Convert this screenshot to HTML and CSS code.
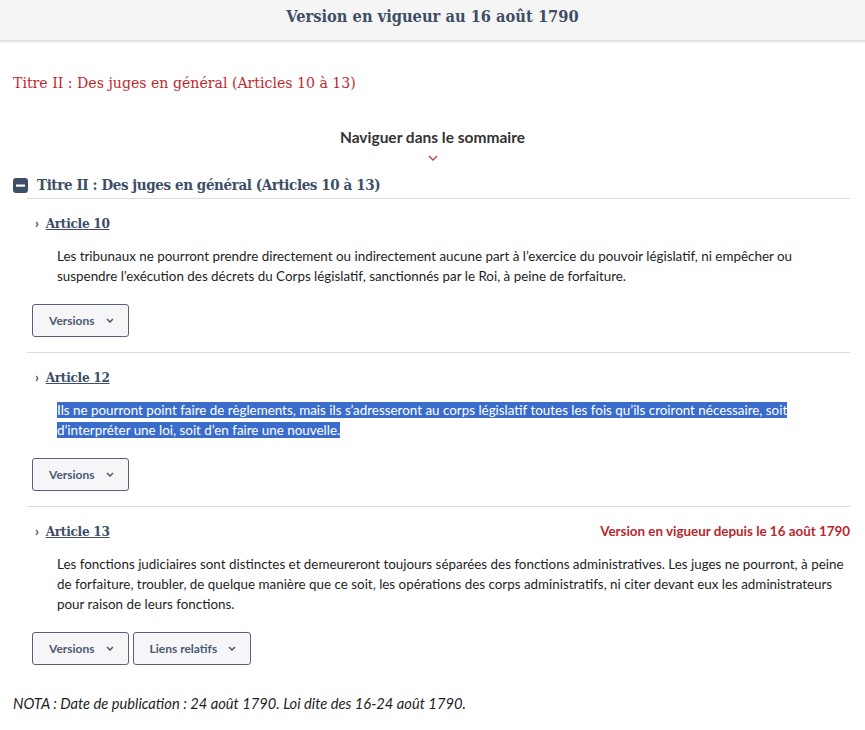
FILE: index.html
```html
<!DOCTYPE html>
<html lang="fr">
<head>
    <meta charset="UTF-8" />
    <title>Version en vigueur au 16 août 1790</title>
    <link rel="stylesheet" href="styles.css">
</head>
<body>
    <div class="version-bar">Version en vigueur au 16 août 1790</div>

    <h1 class="titre-haut">Titre II : Des juges en général (Articles 10 à 13)</h1>

    <div class="naviguer">
        <span>Naviguer dans le sommaire</span>
        <svg class="nav-chevron" width="10" height="6" viewBox="0 0 10 6"><path d="M1 1l4 4 4-4" fill="none" stroke="#b83a3a" stroke-width="1.3"/></svg>
    </div>

    <div class="section">
        <h2 class="section-titre">
            <svg width="15" height="15" viewBox="0 0 15 15"><rect x="0" y="0" width="15" height="15" rx="3" fill="#3d4e66"/><rect x="3" y="6.5" width="9" height="2.2" fill="#fff"/></svg>
            Titre II : Des juges en général (Articles 10 à 13)
        </h2>

        <div class="article">
            <div class="article-head">
                <a class="article-lien" href="#"><span class="chev">›</span><u>Article 10</u></a>
            </div>
            <p class="article-texte">Les tribunaux ne pourront prendre directement ou indirectement aucune part à l’exercice du pouvoir législatif, ni empêcher ou suspendre l’exécution des décrets du Corps législatif, sanctionnés par le Roi, à peine de forfaiture.</p>
            <div class="boutons">
                <button class="btn">Versions <svg width="8" height="5" viewBox="0 0 8 5"><path d="M1 1l3 3 3-3" fill="none" stroke="#4a5a70" stroke-width="1.5"/></svg></button>
            </div>
        </div>

        <div class="article">
            <div class="article-head">
                <a class="article-lien" href="#"><span class="chev">›</span><u>Article 12</u></a>
            </div>
            <p class="article-texte"><span class="selection">Ils ne pourront point faire de règlements, mais ils s’adresseront au corps législatif toutes les fois qu’ils croiront nécessaire, soit d’interpréter une loi, soit d’en faire une nouvelle.</span></p>
            <div class="boutons">
                <button class="btn">Versions <svg width="8" height="5" viewBox="0 0 8 5"><path d="M1 1l3 3 3-3" fill="none" stroke="#4a5a70" stroke-width="1.5"/></svg></button>
            </div>
        </div>

        <div class="article dernier">
            <div class="article-head">
                <a class="article-lien" href="#"><span class="chev">›</span><u>Article 13</u></a>
                <span class="vigueur">Version en vigueur depuis le 16 août 1790</span>
            </div>
            <p class="article-texte">Les fonctions judiciaires sont distinctes et demeureront toujours séparées des fonctions administratives. Les juges ne pourront, à peine de forfaiture, troubler, de quelque manière que ce soit, les opérations des corps administratifs, ni citer devant eux les administrateurs pour raison de leurs fonctions.</p>
            <div class="boutons">
                <button class="btn">Versions <svg width="8" height="5" viewBox="0 0 8 5"><path d="M1 1l3 3 3-3" fill="none" stroke="#4a5a70" stroke-width="1.5"/></svg></button>
                <button class="btn">Liens relatifs <svg width="8" height="5" viewBox="0 0 8 5"><path d="M1 1l3 3 3-3" fill="none" stroke="#4a5a70" stroke-width="1.5"/></svg></button>
            </div>
        </div>
    </div>

    <p class="nota">NOTA : Date de publication : 24 août 1790. Loi dite des 16-24 août 1790.</p>
</body>
</html>
```

FILE: styles.css
```css
body {
    font-family: "Lato", "Open Sans", sans-serif;
    margin: 0;
    padding: 0;
    background-color: #fff;
    color: #1e1e1e;
}

.version-bar {
    height: 40px;
    line-height: 34px;
    background-color: #f5f5f5;
    border-bottom: 1px solid #dcdcdc;
    box-shadow: 0 2px 0 #f2f2f2;
    text-align: center;
    font-family: "DejaVu Serif Condensed", "DejaVu Serif", serif;
    font-weight: bold;
    font-size: 16.3px;
    color: #3d4e66;
}

.titre-haut {
    margin: 32px 0 0 13px;
    font-family: "DejaVu Serif Condensed", "DejaVu Serif", serif;
    font-weight: normal;
    font-size: 15.7px;
    color: #c0282d;
}

.naviguer {
    margin-top: 36px;
    display: flex;
    flex-direction: column;
    align-items: center;
    font-weight: bold;
    font-size: 15.5px;
    color: #333;
}

.nav-chevron {
    margin-top: 9px;
}

.section {
    margin: 15px 15px 0 13px;
}

.section-titre {
    margin: 0;
    display: flex;
    align-items: center;
    gap: 9px;
    font-family: "DejaVu Serif Condensed", "DejaVu Serif", serif;
    font-size: 15px;
    letter-spacing: -0.4px;
    font-weight: bold;
    color: #3d4e66;
    padding-bottom: 4px;
}

.article {
    margin-left: 14px;
    border-top: 1px solid #dddddd;
    padding: 14px 0 15px 0;
}

.article.dernier {
    padding-bottom: 10px;
}

.article-head {
    display: flex;
    justify-content: space-between;
    align-items: center;
    height: 20px;
    padding-left: 8px;
}

.article-lien {
    color: #3d4e66;
    text-decoration: none;
    font-family: "DejaVu Serif Condensed", "DejaVu Serif", serif;
    font-weight: bold;
    font-size: 13.5px;
    letter-spacing: -0.3px;
}

.article-lien u {
    text-decoration-color: #3d4e66;
}

.chev {
    margin-right: 7px;
    font-family: "Lato", sans-serif;
}

.vigueur {
    color: #b8282d;
    font-weight: bold;
    font-size: 13.4px;
}

.article-texte {
    margin: 13px 0 0 30px;
    font-size: 13.4px;
    line-height: 20px;
}

.selection {
    background-color: #3a6ccb;
    color: #fff;
}

.boutons {
    margin-top: 18px;
    display: flex;
    gap: 4px;
    padding-left: 5px;
}

.btn {
    height: 33px;
    padding: 0 14px 0 16px;
    border: 1px solid #55627a;
    border-radius: 3px;
    background-color: #f6f6f8;
    font-family: "Lato", sans-serif;
    font-weight: bold;
    font-size: 12px;
    color: #4a5a70;
    display: flex;
    align-items: center;
    gap: 11px;
}

.nota {
    margin: 19px 0 0 13px;
    font-style: italic;
    font-size: 14.7px;
}
```
